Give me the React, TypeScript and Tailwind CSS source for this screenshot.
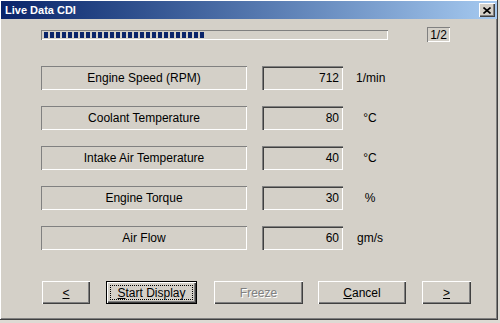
import React from 'react';

const rows = [
  { label: 'Engine Speed (RPM)', value: '712', unit: '1/min' },
  { label: 'Coolant Temperature', value: '80', unit: '°C' },
  { label: 'Intake Air Temperature', value: '40', unit: '°C' },
  { label: 'Engine Torque', value: '30', unit: '%' },
  { label: 'Air Flow', value: '60', unit: 'gm/s' },
];

const bevel =
  'shadow-[inset_1px_1px_#ffffff,inset_-1px_-1px_#404040,inset_-2px_-2px_#808080]';

const Button: React.FC<{
  width: string;
  children: React.ReactNode;
  isDefault?: boolean;
  disabled?: boolean;
  className?: string;
}> = ({ width, children, isDefault, disabled, className = '' }) => {
  if (isDefault) {
    return (
      <div className={`${width} h-[23px] border border-black bg-[#d4d0c8] ${className}`}>
        <div className={`relative w-full h-full ${bevel} flex items-center justify-center text-black`}>
          <div className="absolute inset-[3px] border border-dotted border-black" />
          <span>{children}</span>
        </div>
      </div>
    );
  }
  return (
    <div
      className={`${width} h-[23px] bg-[#d4d0c8] ${bevel} flex items-center justify-center ${
        disabled ? 'text-[#808080] [text-shadow:1px_1px_#ffffff]' : 'text-black'
      } ${className}`}
    >
      {children}
    </div>
  );
};

export default function App() {
  return (
    <div
      className="w-[500px] h-[323px] bg-[#dedad4] overflow-hidden"
      style={{ fontFamily: '"Liberation Sans", Arial, sans-serif' }}
    >
      <div className="w-[498px] h-[320px] bg-[#d4d0c8] flex flex-col shadow-[inset_-1px_-1px_#404040,inset_1px_1px_#ffffff,inset_-2px_-2px_#808080]">
        {/* title bar */}
        <div className="relative mx-px mt-px h-[18px] bg-gradient-to-r from-[#0a246a] to-[#a6caf0] flex items-center pl-[4px]">
          <span className="text-white font-bold text-[11px] leading-none">Live Data CDI</span>
          <div className={`absolute right-[2px] top-[2px] w-[16px] h-[14px] bg-[#d4d0c8] ${bevel} flex items-center justify-center`}>
            <svg width="8" height="7" viewBox="0 0 8 7">
              <path d="M0.5 0.5 L7.5 6.5 M7.5 0.5 L0.5 6.5" stroke="#000" strokeWidth="1.6" />
            </svg>
          </div>
        </div>

        <div className="pl-[41px] flex flex-col">
          {/* progress */}
          <div className="mt-[8px] flex items-center">
            <div className="w-[347px] h-[10px] shadow-[inset_1px_1px_#808080,inset_-1px_-1px_#ffffff] flex items-center gap-[2px] pl-[3px]">
              {Array.from({ length: 27 }).map((_, i) => (
                <div key={i} className="w-[4px] h-[6px] bg-[#0a246a]" />
              ))}
            </div>
            <div className="ml-[39px] w-[23px] h-[15px] shadow-[inset_1px_1px_#808080,inset_-1px_-1px_#ffffff] flex items-center justify-center text-[12px] text-black">
              1/2
            </div>
          </div>

          {/* data rows */}
          <div className="mt-[24px] flex flex-col gap-[16px]">
            {rows.map((r) => (
              <div key={r.label} className="flex items-center h-[24px] text-[12px] text-black">
                <div className="w-[206px] h-[24px] shadow-[inset_1px_1px_#808080,inset_-1px_-1px_#ffffff] flex items-center justify-center">
                  {r.label}
                </div>
                <div className="ml-[15px] w-[81px] h-[24px] shadow-[inset_1px_1px_#808080,inset_2px_2px_#404040,inset_-1px_-1px_#ffffff] flex items-center justify-end pr-[4px]">
                  {r.value}
                </div>
                <div className="ml-[13px] w-[28px] text-center">{r.unit}</div>
              </div>
            ))}
          </div>

          {/* buttons */}
          <div className="mt-[31px] flex items-center text-[12px]">
            <Button width="w-[48px]" className="ml-px">
              <span className="underline">&lt;</span>
            </Button>
            <Button width="w-[91px]" isDefault className="ml-[16px]">
              <span className="underline">S</span>tart Display
            </Button>
            <Button width="w-[89px]" disabled className="ml-[17px]">
              Freeze
            </Button>
            <Button width="w-[88px]" className="ml-[15px]">
              <span className="underline">C</span>ancel
            </Button>
            <Button width="w-[49px]" className="ml-[16px]">
              <span className="underline">&gt;</span>
            </Button>
          </div>
        </div>
      </div>
    </div>
  );
}
